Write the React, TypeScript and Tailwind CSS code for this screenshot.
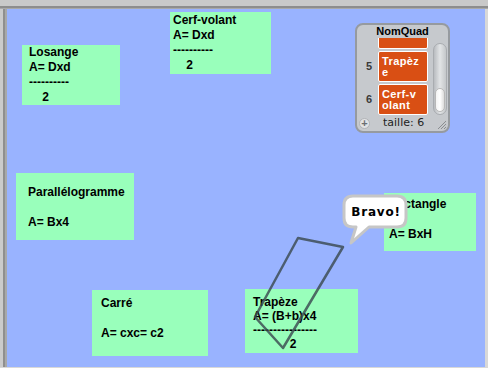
import React from 'react';

const font = { fontFamily: '"Liberation Sans", Arial, sans-serif' };

interface NoteProps {
  className: string;
  lines: string[];
}

// a green text sprite on the stage
function Note({ className, lines }: NoteProps) {
  return (
    <div className={`absolute bg-[#99ffbb] text-[12px] font-bold leading-[15px] text-black whitespace-pre ${className}`}>
      {lines.map((l, i) => (
        <div key={i} className="h-[15px]">{l}</div>
      ))}
    </div>
  );
}

function ListItem({ index, lines, className = '' }: { index: string; lines: string[]; className?: string }) {
  return (
    <div className={`flex items-center ${className}`}>
      <div className="w-[21px] pl-[3px] text-center text-[11px] font-bold text-[#3a3a3a]">{index}</div>
      <div className="w-[50px] h-[31px] bg-[#d94f14] border border-white rounded-[2px] pl-[3px] pt-[4px] text-[11px] leading-[11px] tracking-[0.4px] font-bold text-white">
        {lines.map((l, i) => (
          <div key={i}>{l}</div>
        ))}
      </div>
    </div>
  );
}

function ListMonitor() {
  return (
    <div className="absolute left-[348px] top-[14px] w-[95px] h-[110px] rounded-[8px] border-2 border-[#969a9f] bg-[#c6c9cd] flex flex-col" style={font}>
      <div className="h-[13px] flex items-center justify-center text-[11px] font-bold text-black">NomQuad</div>
      <div className="h-[77px] flex items-start">
        <div className="h-[77px] overflow-hidden flex flex-col gap-[2px]">
          <ListItem index="" lines={['']} className="-mt-[20px]" />
          <ListItem index="5" lines={['Trapèz', 'e']} />
          <ListItem index="6" lines={['Cerf-v', 'olant']} />
        </div>
        <div className="ml-[5px] mt-[5px] w-[14px] h-[72px] rounded-full border border-[#a9acb0] bg-gradient-to-r from-[#b9bcc0] via-[#e2e4e6] to-[#c4c7ca] flex flex-col justify-end items-center pb-[2px]">
          <div className="w-[10px] h-[24px] rounded-full bg-gradient-to-r from-[#f4f4f4] via-white to-[#dcdcdc] border border-[#b8b8b8]" />
        </div>
      </div>
      <div className="h-[16px] flex items-center relative">
        <div className="ml-[2px] w-[11px] h-[11px] rounded-full bg-[#e2e3e5] border border-[#b2b4b7] flex items-center justify-center text-[11px] leading-none text-[#6b6e72] font-bold">+</div>
        <div className="ml-[13px] text-[11px] text-[#222]" style={{ fontFamily: '"DejaVu Sans", sans-serif' }}>taille: 6</div>
        <svg className="absolute right-[1px] bottom-[1px]" width="10" height="10" viewBox="0 0 10 10">
          <path d="M9 1 L1 9 M9 4 L4 9 M9 7 L7 9" stroke="#8a8d91" strokeWidth="1" />
        </svg>
      </div>
    </div>
  );
}

function Bubble() {
  return (
    <div className="absolute left-[334px] top-[184px] w-[70px] h-[54px]">
      <svg width="70" height="54" viewBox="0 0 70 54" className="absolute left-0 top-0">
        <path
          d="M12 3 H56 Q65 3 65 12 V25 Q65 34 56 34 H28 L10 50 L15 34 H12 Q3 34 3 25 V12 Q3 3 12 3 Z"
          fill="white"
          stroke="#c6c6c6"
          strokeWidth="3"
          strokeLinejoin="round"
        />
      </svg>
      <div
        className="absolute left-[4px] top-[3px] w-[62px] h-[31px] flex items-center justify-center text-[12px] font-bold text-black tracking-[0.8px]"
        style={{ fontFamily: '"DejaVu Sans", sans-serif' }}
      >
        Bravo!
      </div>
    </div>
  );
}

export default function App() {
  return (
    <div className="w-[488px] h-[368px] flex flex-col bg-[#d6d6d6] overflow-hidden" style={font}>
      <div className="h-[9px] flex flex-col shrink-0">
        <div className="h-[6px] bg-[#c9c9c9]" />
        <div className="h-[2px] bg-[#8d8d8d]" />
        <div className="h-[1px] bg-[#a9a9a9]" />
      </div>
      <div className="flex h-[358px]">
        <div className="w-[7px] flex shrink-0">
          <div className="w-[3px] bg-[#cbcbcb]" />
          <div className="w-[2px] bg-[#8f8f8f]" />
          <div className="w-[2px] bg-[#a8a8a8]" />
        </div>
        <div className="relative w-[478px] h-[358px] bg-[#99b3ff] overflow-hidden">
          <Note className="left-[15px] top-[36px] w-[98px] h-[60px] pl-[7px]" lines={['Losange', 'A= Dxd', '----------', '    2']} />
          <Note className="left-[163px] top-[3px] w-[101px] h-[62px] pl-[3px] pt-[1px]" lines={['Cerf-volant', 'A= Dxd', '----------', '    2']} />
          <Note className="left-[9px] top-[164px] w-[118px] h-[67px] pl-[12px] pt-[12px]" lines={['Parallélogramme', '', 'A= Bx4']} />
          <Note className="left-[85px] top-[281px] w-[116px] h-[66px] pl-[9px] pt-[6px]" lines={['Carré', '', 'A= cxc= c2']} />
          <Note className="left-[377px] top-[184px] w-[92px] h-[58px] pl-[5px] pt-[4px]" lines={['Rectangle', '', 'A= BxH']} />
          <div className="absolute left-[238px] top-[280px] w-[113px] h-[64px] bg-[#99ffbb] pl-[8px] pt-[6px] text-[12px] font-bold leading-[14px] text-black whitespace-pre">
            <div>Trapèze</div>
            <div>A= (B+b)x4</div>
            <div>----------------</div>
            <div>{'           2'}</div>
          </div>
          <svg className="absolute left-0 top-0 pointer-events-none" width="478" height="358" viewBox="0 0 478 358">
            <path
              d="M291 229 L336 238 L276 339 L248 308 Z"
              fill="none"
              stroke="#3a4a50"
              strokeOpacity="0.82"
              strokeWidth="2.5"
              strokeLinejoin="round"
            />
          </svg>
          <Bubble />
          <ListMonitor />
        </div>
        <div className="w-[3px] bg-[#d8d8d8]" />
      </div>
      <div className="h-[1px] bg-[#d8d8d8]" />
    </div>
  );
}
